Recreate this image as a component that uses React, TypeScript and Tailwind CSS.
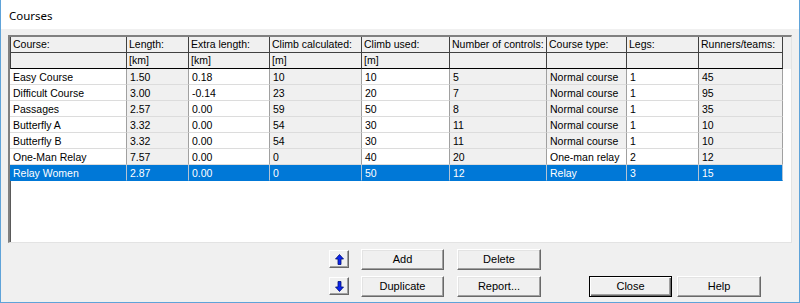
const cols = [
  "w-[117px]",
  "w-[62px]",
  "w-[81px]",
  "w-[92px]",
  "w-[88px]",
  "w-[97px]",
  "w-[80px]",
  "w-[72px]",
  "w-[84px]",
];

const head1 = [
  "Course:",
  "Length:",
  "Extra length:",
  "Climb calculated:",
  "Climb used:",
  "Number of controls:",
  "Course type:",
  "Legs:",
  "Runners/teams:",
];
const head2 = ["", "[km]", "[km]", "[m]", "[m]", "", "", "", ""];

const rows = [
  ["Easy Course", "1.50", "0.18", "10", "10", "5", "Normal course", "1", "45"],
  ["Difficult Course", "3.00", "-0.14", "23", "20", "7", "Normal course", "1", "95"],
  ["Passages", "2.57", "0.00", "59", "50", "8", "Normal course", "1", "35"],
  ["Butterfly A", "3.32", "0.00", "54", "30", "11", "Normal course", "1", "10"],
  ["Butterfly B", "3.32", "0.00", "54", "30", "11", "Normal course", "1", "10"],
  ["One-Man Relay", "7.57", "0.00", "0", "40", "20", "One-man relay", "2", "12"],
  ["Relay Women", "2.87", "0.00", "0", "50", "12", "Relay", "3", "15"],
];

// read-only cells get the grey face
function isGrey(col: number, value: string) {
  if (col === 1 || col === 3 || col === 5 || col === 8) return true;
  if (col === 6 && value === "Normal course") return true;
  return false;
}

function Arrow({ down }: { down?: boolean }) {
  return (
    <svg width="9" height="11" viewBox="0 0 9 11" className={down ? "rotate-180" : ""}>
      <path d="M4.5 0.5 L8.5 5 L6 5 L6 10.5 L3 10.5 L3 5 L0.5 5 Z" fill="#0a24f0" stroke="#00106e" strokeWidth="0.8" />
    </svg>
  );
}

function Btn({ label, isDefault }: { label: string; isDefault?: boolean }) {
  return (
    <div
      className={
        isDefault
          ? "flex h-[21px] items-center justify-center border border-black bg-[#f0f0f0] shadow-[inset_1px_1px_0_#ffffff,inset_-1px_-1px_0_#696969,inset_-2px_-2px_0_#a0a0a0] text-[11px] text-black"
          : "flex h-[21px] items-center justify-center border-t border-l border-t-white border-l-white border-r border-b border-r-[#696969] border-b-[#696969] bg-[#f0f0f0] shadow-[inset_-1px_-1px_0_#a0a0a0,inset_1px_1px_0_#e3e3e3] text-[11px] text-black"
      }
    >
      {label}
    </div>
  );
}

function ArrowBtn({ down }: { down?: boolean }) {
  return (
    <div className="flex h-[18px] w-[20px] items-center justify-center border-t border-l border-t-white border-l-white border-r border-b border-r-[#696969] border-b-[#696969] bg-[#f0f0f0] shadow-[inset_-1px_-1px_0_#a0a0a0]">
      <Arrow down={down} />
    </div>
  );
}

export default function App() {
  return (
    <div className="flex h-[303px] w-[800px] flex-col border-x border-b border-[#5fa3d9] bg-[#f0f0f0] font-['Liberation_Sans',sans-serif] text-black">
      <div className="flex h-[29px] shrink-0 items-center bg-white pl-[8px] pt-[2px] font-['Noto_Sans',sans-serif] text-[11.5px]">
        Courses
      </div>

      <div className="ml-[7px] mt-[6px] flex h-[208px] w-[784px] flex-col overflow-hidden border-t-2 border-l-2 border-t-[#808080] border-l-[#808080] border-b border-r border-b-[#e3e3e3] border-r-[#e3e3e3] bg-white shadow-[inset_1px_1px_0_#5a5a5a]">
        <div className="flex h-[16px] bg-[#f0f0f0]">
          {head1.map((h, i) => (
            <div
              key={i}
              className={`${cols[i]} flex h-full shrink-0 items-center border-r border-b border-[#404040] pl-[2px] pt-[1px] text-[10.5px] whitespace-nowrap ${i === 0 ? "border-l border-l-[#404040]" : ""}`}
            >
              {h}
            </div>
          ))}
        </div>
        <div className="flex h-[16px] bg-[#f0f0f0]">
          {head2.map((h, i) => (
            <div
              key={i}
              className={`${cols[i]} flex h-full shrink-0 items-center border-r border-b border-r-[#404040] border-b-black pl-[2px] pt-[1px] text-[10.5px] whitespace-nowrap ${i === 0 ? "border-l border-l-[#404040]" : ""}`}
            >
              {h}
            </div>
          ))}
        </div>
        {rows.map((r, ri) => {
          const sel = ri === rows.length - 1;
          return (
            <div key={ri} className="flex h-[16px]">
              {r.map((v, ci) => (
                <div
                  key={ci}
                  className={`${cols[ci]} flex h-full shrink-0 items-center border-r pl-[3px] pt-[3px] text-[10.5px] whitespace-nowrap ${
                    sel
                      ? "border-b border-b-[#0078d7] border-r-[#b4c4d4] bg-[#0078d7] text-white"
                      : `border-b border-b-[#dcdcdc] border-r-[#a0a0a0] ${isGrey(ci, v) ? "bg-[#f0f0f0]" : "bg-white"}`
                  }`}
                >
                  {v}
                </div>
              ))}
            </div>
          );
        })}
      </div>

      <div className="ml-[328px] mt-[6px] flex">
        <div className="flex w-[20px] flex-col gap-[6px]">
          <div className="h-[21px] pt-[1px]">
            <ArrowBtn />
          </div>
          <div className="h-[21px] pt-[1px]">
            <ArrowBtn down />
          </div>
        </div>
        <div className="ml-[12px] flex w-[83px] flex-col gap-[6px]">
          <Btn label="Add" />
          <Btn label="Duplicate" />
        </div>
        <div className="ml-[13px] flex w-[84px] flex-col gap-[6px]">
          <Btn label="Delete" />
          <Btn label="Report..." />
        </div>
        <div className="ml-[48px] flex w-[83px] flex-col gap-[6px]">
          <div className="h-[21px]" />
          <Btn label="Close" isDefault />
        </div>
        <div className="ml-[5px] flex w-[84px] flex-col gap-[6px]">
          <div className="h-[21px]" />
          <Btn label="Help" />
        </div>
      </div>
    </div>
  );
}
